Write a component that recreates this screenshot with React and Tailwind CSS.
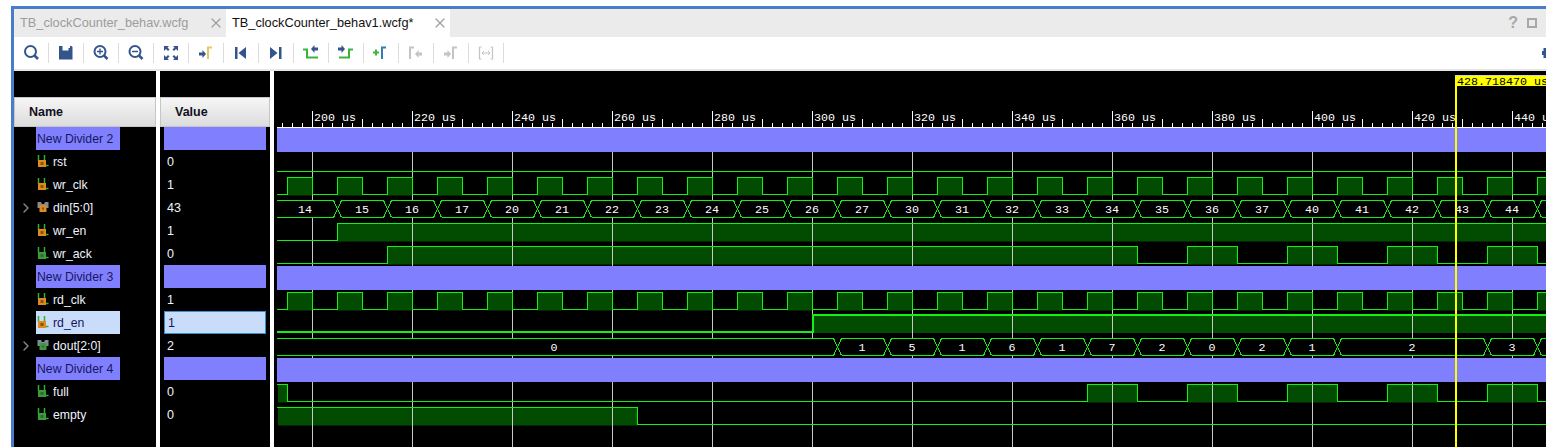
import { ChevronRight, X } from "lucide-react";

const NAVY = "#34558b";
const GREEN = "#3cb43c";
const GRAY = "#c4c4c4";
const WAVE = "#14f014";

const Rung = ({ x, color }) => <path d={`M${x} 15V3.5H${x + 4}`} stroke={color} strokeWidth="2" fill="none" />;
const ArrowR = ({ x, y, color }) => <path d={`M${x} ${y - 1.5}h3.5v-2.5l3.5 4-3.5 4v-2.5h-3.5z`} fill={color} />;
const ArrowL = ({ x, y, color }) => <path d={`M${x} ${y - 1.5}h-3.5v-2.5l-3.5 4 3.5 4v-2.5h3.5z`} fill={color} />;

const tools = [
  <>
    <circle cx="8.5" cy="7.5" r="5.5" stroke={NAVY} strokeWidth="2" fill="none" />
    <path d="M12.5 11.5l3.5 3.5" stroke={NAVY} strokeWidth="2.5" />
  </>,
  <path d="M2 2h3.5v4.5h6V4h1.5V2h1.5l1 1v12.5H2z" fill={NAVY} />,
  <>
    <circle cx="8" cy="7.5" r="5.5" stroke={NAVY} strokeWidth="2" fill="none" />
    <path d="M5 7.5h6M8 4.5v6" stroke={NAVY} strokeWidth="1.3" />
    <path d="M12 11.5l3.5 3.5" stroke={NAVY} strokeWidth="2.5" />
  </>,
  <>
    <circle cx="8" cy="7.5" r="5.5" stroke={NAVY} strokeWidth="2" fill="none" />
    <path d="M5 7.5h6" stroke={NAVY} strokeWidth="1.5" />
    <path d="M12 11.5l3.5 3.5" stroke={NAVY} strokeWidth="2.5" />
  </>,
  <path
    d="M2 2h5L5.500 3.500 7.500 5.500 6 7 4 5 2 7zM16 2h-5l1.500 1.500-2 2L12 7l2-2 2 2zM2 16h5l-1.500-1.500 2-2L6 11l-2 2-2-2zM16 16h-5l1.500-1.500-2-2L12 11l2 2 2-2z"
    fill={NAVY}
  />,
  <>
    <ArrowR x={2} y={10} color={NAVY} />
    <Rung x={11} color="#e6c766" />
  </>,
  <>
    <path d="M3 3h2.500v12H3z" fill={NAVY} />
    <path d="M14 3v12L6.500 9z" fill={NAVY} />
  </>,
  <>
    <path d="M3 3v12l7.500-6z" fill={NAVY} />
    <path d="M12 3h2.500v12H12z" fill={NAVY} />
  </>,
  <>
    <path d="M1 5.500h4v8h11" stroke={GREEN} strokeWidth="2" fill="none" />
    <ArrowL x={16} y={5} color={NAVY} />
  </>,
  <>
    <path d="M2 13.500h10v-8h4" stroke={GREEN} strokeWidth="2" fill="none" />
    <ArrowR x={1} y={5} color={NAVY} />
  </>,
  <>
    <path d="M1 8.500h6M4 5.500v6" stroke={GREEN} strokeWidth="2" />
    <Rung x={10} color="#2f7fb2" />
  </>,
  <>
    <Rung x={3} color={GRAY} />
    <ArrowL x={15} y={10} color={GRAY} />
  </>,
  <>
    <ArrowR x={2} y={10} color={GRAY} />
    <Rung x={11} color={GRAY} />
  </>,
  <>
    <path d="M2.500 3v12h2M15.500 3v12h-2M2.500 3h2M15.500 3h-2" stroke={GRAY} strokeWidth="1.200" fill="none" />
    <path d="M5 9h8M5 9l2-2M5 9l2 2M13 9l-2-2M13 9l-2 2" stroke={GRAY} strokeWidth="1" fill="none" />
  </>,
];

const SignalIcon = ({ kind, bus }) => {
  const body = kind === "in" ? "#e08a1e" : "#3f9a3f";
  const mark = kind === "in" ? "#8a5210" : "#2c6c2c";
  if (bus) {
    return (
      <svg width="15" height="15" viewBox="0 0 15 15" className="shrink-0">
        <path d="M0.500 2h3.500l1 2h2l1-2h3.500v6H0.500z" fill="#7d8c96" />
        <rect x="2.500" y="5" width="7" height="7" fill={body} />
        <rect x="5" y="7.500" width="2" height="2" fill={mark} />
      </svg>
    );
  }
  return (
    <svg width="15" height="15" viewBox="0 0 15 15" className="shrink-0">
      <path d="M1.500 1v6M7.500 1v6M9 11.500h2.500" stroke="#2fb02f" strokeWidth="1.500" fill="none" />
      <rect x="1" y="6" width="8" height="7" fill={body} />
      <rect x="3.500" y="8" width="3" height="3" fill={mark} />
    </svg>
  );
};

const rows = [
  { divider: "New Divider 2" },
  { name: "rst", value: "0", kind: "in" },
  { name: "wr_clk", value: "1", kind: "in" },
  { name: "din[5:0]", value: "43", kind: "in", bus: true },
  { name: "wr_en", value: "1", kind: "in" },
  { name: "wr_ack", value: "0", kind: "out" },
  { divider: "New Divider 3" },
  { name: "rd_clk", value: "1", kind: "in" },
  { name: "rd_en", value: "1", kind: "in", selected: true },
  { name: "dout[2:0]", value: "2", kind: "out", bus: true },
  { divider: "New Divider 4" },
  { name: "full", value: "0", kind: "out" },
  { name: "empty", value: "0", kind: "out" },
];

const ColumnHeader = ({ label, pad }) => (
  <div className={`h-[30px] mt-[26px] border border-[#c6c6c6] bg-linear-to-b from-[#f6f6f6] to-[#dcdcdc] flex items-center font-bold text-[12.5px] text-[#111122] pt-[1px] ${pad}`}>
    {label}
  </div>
);

const range = (n) => Array.from({ length: n }, (_, i) => i);
const pulses = (list) => list.map((x) => [x, x + 50]);
const clockHighs = range(26).map((k) => [287 + 50 * k, 312 + 50 * k]);

// digital traces: top is the y of the high level, bottom of the low level
const traces = [
  { top: 154.5, bottom: 171.5, highs: [] },
  { top: 177.5, bottom: 194.5, highs: clockHighs },
  { top: 223.5, bottom: 240.5, highs: [[337, 1560]] },
  { top: 246.5, bottom: 263.5, highs: [[387, 1137], ...pulses([1187, 1287, 1387, 1487])] },
  { top: 292.5, bottom: 309.5, highs: clockHighs },
  { top: 315, bottom: 332, highs: [[812, 1560]], thick: true },
  { top: 384.5, bottom: 401.5, highs: [[277, 287], ...pulses([1087, 1187, 1287, 1387, 1487])] },
  { top: 407.5, bottom: 424.5, highs: [[277, 637]] },
];

const tracePath = ({ top, bottom, highs }) => {
  let d = "";
  let x = 277;
  highs.forEach(([a, b]) => {
    if (a > x) d += `M${x} ${bottom}H${a + 0.5}V${top}`;
    else d += `M${a} ${top}`;
    d += `H${b + 0.5}V${bottom}`;
    x = b + 0.5;
  });
  if (x < 1546) d += `M${x} ${bottom}H1546`;
  return d;
};

const busPath = (top, bottom, edges) => {
  let d = "";
  let x = 277;
  edges.forEach((t) => {
    d += `M${x} ${top}H${t - 3.5}L${t + 4.5} ${bottom}M${x} ${bottom}H${t - 3.5}L${t + 4.5} ${top}`;
    x = t + 4.5;
  });
  d += `M${x} ${top}H1546M${x} ${bottom}H1546`;
  return d;
};

const dinEdges = range(25).map((k) => 337 + 50 * k);
const dinValues = [14, 15, 16, 17, 20, 21, 22, 23, 24, 25, 26, 27, 30, 31, 32, 33, 34, 35, 36, 37, 40, 41, 42, 43, 44];
const doutEdges = [837, 887, 937, 987, 1037, 1087, 1137, 1187, 1237, 1287, 1337, 1487, 1537];
const doutLabels = [
  [554, "0"], [862, "1"], [912, "5"], [962, "1"], [1012, "6"], [1062, "1"], [1112, "7"],
  [1162, "2"], [1212, "0"], [1262, "2"], [1312, "1"], [1412, "2"], [1512, "3"],
];

const mono = { fontFamily: "'Liberation Mono', monospace", fontSize: 11.67 };

const Waves = () => (
  <svg width="1272" height="376" viewBox="274 71 1272 376" style={mono} className="block">
    {/* ruler */}
    <path d="M277 127.500H1546" stroke="#fff" />
    {range(127).map((k) => {
      const x = 282.5 + 10 * k;
      const step = (k - 3) % 10;
      const major = step === 0;
      const mid = Math.abs(step) === 5;
      return <path key={k} d={`M${x} 127V${major ? 111 : mid ? 119 : 123}`} stroke="#fff" />;
    })}
    {range(13).map((k) => (
      <text key={k} x={314 + 100 * k} y={121} fill="#fff">
        {200 + 20 * k} us
      </text>
    ))}

    {/* level fill, then grid, then the lines on top */}
    {traces.flatMap((t, i) =>
      t.highs.map(([a, b]) => (
        <rect key={`${i}-${a}`} x={Math.max(a, 278)} y={t.top} width={b - Math.max(a, 278)} height={t.bottom - t.top + 1} fill="#024c02" />
      ))
    )}
    {range(13).map((k) => (
      <path key={k} d={`M${312.5 + 100 * k} 128V447`} stroke="#c8c8c8" />
    ))}
    <rect x="277" y="200" width="1269" height="18" fill="#000" />
    <rect x="277" y="338" width="1269" height="18" fill="#000" />
    {traces.map((t, i) => (
      <path key={i} d={tracePath(t)} fill="none" stroke={WAVE} strokeWidth={t.thick ? 2 : 1} shapeRendering="crispEdges" />
    ))}

    {/* busses */}
    <path d={busPath(200.5, 217.5, dinEdges)} fill="none" stroke={WAVE} shapeRendering="crispEdges" />
    {dinValues.map((v, i) => (
      <text key={i} x={i === 0 ? 305 : 312 + 50 * i} y={213} fill="#fff" textAnchor="middle">
        {v}
      </text>
    ))}
    <path d={busPath(338.5, 355.5, doutEdges)} fill="none" stroke={WAVE} shapeRendering="crispEdges" />
    {doutLabels.map(([x, v]) => (
      <text key={x} x={x} y={351} fill="#fff" textAnchor="middle">
        {v}
      </text>
    ))}

    {/* dividers */}
    <rect x="277" y="128" width="1269" height="24" fill="#8080ff" />
    <rect x="277" y="266" width="1269" height="24" fill="#8080ff" />
    <rect x="277" y="358" width="1269" height="24" fill="#8080ff" />

    {/* cursor */}
    <rect x="1455" y="86" width="2" height="361" fill="#ffff00" />
    <rect x="1455" y="75" width="91" height="11" fill="#ffff00" />
    <path d="M1455 75.500H1546" stroke="#d0d0d0" />
    <text x={1457} y={85} fill="#000">
      428.718470 us
    </text>
  </svg>
);

export default function App() {
  return (
    <div className="w-[1546px] h-[447px] overflow-hidden bg-white pl-[11px] pt-[6px] font-['Liberation_Sans',sans-serif]">
      <div className="h-full flex flex-col border-l-[3px] border-t-[3px] border-[#4a7ccc]">
        {/* tabs */}
        <div className="h-[28px] shrink-0 flex items-stretch bg-[#ebebeb] text-[12.75px]">
          <div className="w-[212px] flex items-center pl-[6px] text-[#9c9c9c]">
            <span className="flex-1">TB_clockCounter_behav.wcfg</span>
            <X size={16} strokeWidth={1.8} className="mr-[2px] text-[#a0a0a0]" />
          </div>
          <div className="w-[224px] flex items-center pl-[6px] bg-white text-[#111111]">
            <span className="flex-1">TB_clockCounter_behav1.wcfg*</span>
            <X size={16} strokeWidth={1.8} className="mr-[2px] text-[#a0a0a0]" />
          </div>
          <div className="ml-auto flex items-center gap-[9px] pr-[9px] text-[#a8a8a8]">
            <span className="font-bold text-[16px]">?</span>
            <span className="w-[10px] h-[10px] border-2 border-[#a8a8a8]" />
          </div>
        </div>

        {/* toolbar */}
        <div className="h-[34px] shrink-0 flex items-center bg-white border-b-2 border-[#e6e6e6]">
          {tools.map((icon, i) => (
            <div key={i} className="w-[35px] h-[20px] flex items-center justify-center border-r border-[#dcdcdc]">
              <svg width="18" height="18" viewBox="0 0 18 18">
                {icon}
              </svg>
            </div>
          ))}
          <svg width="4" height="10" viewBox="0 0 4 10" className="ml-auto">
            <path d="M1.500 0h2.500v10h-2.500v-3h-1.500v-4h1.500z" fill={NAVY} />
          </svg>
        </div>

        {/* panels */}
        <div className="flex-1 flex gap-[4px] bg-white overflow-hidden">
          <div className="w-[142px] bg-black text-[12.25px]">
            <ColumnHeader label="Name" pad="pl-[14px]" />
            {rows.map((r, i) =>
              r.divider ? (
                <div key={i} className="h-[23px] ml-[22px] w-[84px] bg-[#8080ff] flex items-center pl-[1px] pt-[2px] text-[#16165e]">
                  {r.divider}
                </div>
              ) : (
                <div key={i} className={`h-[23px] ml-[22px] w-[84px] relative flex items-center gap-[1px] pl-[1px] ${r.selected ? "bg-[#c9ddfb] text-[#16165e]" : "text-[#eef3ff]"}`}>
                  {r.bus && <ChevronRight size={16} strokeWidth={2} className="absolute left-[-18px] text-[#8a8a8a]" />}
                  <SignalIcon kind={r.kind} bus={r.bus} />
                  <span className="pt-[2px]">{r.name}</span>
                </div>
              )
            )}
          </div>
          <div className="w-[110px] bg-black text-[12.5px]">
            <ColumnHeader label="Value" pad="pl-[14px]" />
            {rows.map((r, i) =>
              r.divider ? (
                <div key={i} className="h-[23px] ml-[4px] w-[102px] bg-[#8080ff]" />
              ) : (
                <div key={i} className={`h-[23px] ml-[4px] w-[102px] flex items-center pt-[2px] pl-[3px] ${r.selected ? "bg-[#c9ddfb] border border-[#3a8fd0] pl-[2px] text-[#16165e]" : "text-[#eef3ff]"}`}>
                  {r.value}
                </div>
              )
            )}
          </div>
          <div className="flex-1 bg-black">
            <Waves />
          </div>
        </div>
      </div>
    </div>
  );
}
